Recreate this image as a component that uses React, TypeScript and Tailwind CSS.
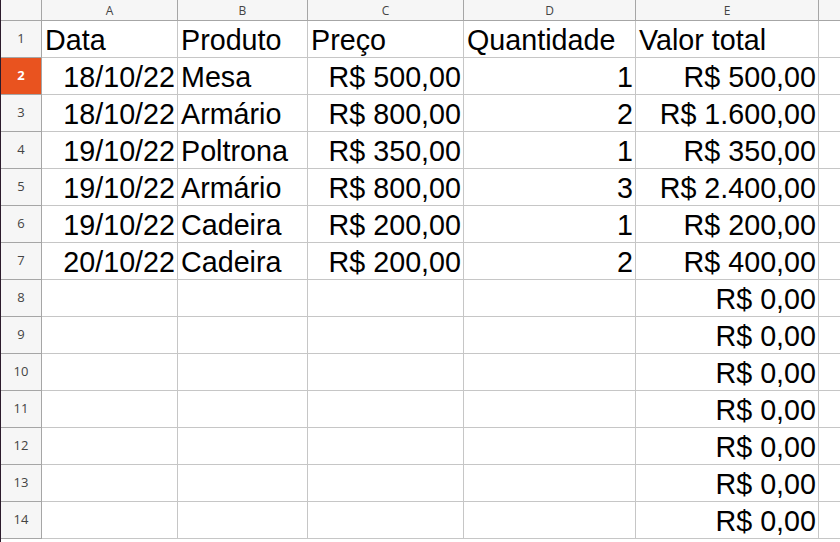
import React from "react";

const cols = [
  { key: "A", w: 136 },
  { key: "B", w: 130 },
  { key: "C", w: 156 },
  { key: "D", w: 172 },
  { key: "E", w: 183 },
];

type Cell = { t: string; r?: boolean };

const data: Cell[][] = [
  [{ t: "Data" }, { t: "Produto" }, { t: "Preço" }, { t: "Quantidade" }, { t: "Valor total" }],
  [{ t: "18/10/22", r: true }, { t: "Mesa" }, { t: "R$ 500,00", r: true }, { t: "1", r: true }, { t: "R$ 500,00", r: true }],
  [{ t: "18/10/22", r: true }, { t: "Armário" }, { t: "R$ 800,00", r: true }, { t: "2", r: true }, { t: "R$ 1.600,00", r: true }],
  [{ t: "19/10/22", r: true }, { t: "Poltrona" }, { t: "R$ 350,00", r: true }, { t: "1", r: true }, { t: "R$ 350,00", r: true }],
  [{ t: "19/10/22", r: true }, { t: "Armário" }, { t: "R$ 800,00", r: true }, { t: "3", r: true }, { t: "R$ 2.400,00", r: true }],
  [{ t: "19/10/22", r: true }, { t: "Cadeira" }, { t: "R$ 200,00", r: true }, { t: "1", r: true }, { t: "R$ 200,00", r: true }],
  [{ t: "20/10/22", r: true }, { t: "Cadeira" }, { t: "R$ 200,00", r: true }, { t: "2", r: true }, { t: "R$ 400,00", r: true }],
];

for (let i = 0; i < 7; i++) {
  data.push([{ t: "" }, { t: "" }, { t: "" }, { t: "" }, { t: "R$ 0,00", r: true }]);
}

export default function App() {
  return (
    <div
      className="w-[840px] h-[542px] overflow-hidden bg-white flex"
      style={{ fontFamily: '"Liberation Sans", Arial, sans-serif' }}
    >
      <div className="w-[1px] shrink-0 bg-[#2c1b2c]" />
      <div className="flex-1 flex flex-col min-w-0">
        {/* header row */}
        <div className="flex h-[21px] shrink-0 bg-[#f6f6f6] border-b border-[#a6a6a6]">
          <div className="w-[41px] shrink-0 border-r border-[#a6a6a6]" />
          {cols.map((c) => (
            <div
              key={c.key}
              className="shrink-0 border-r border-[#a6a6a6] flex items-center justify-center text-[12px] text-[#444] pt-[1px]"
              style={{ width: c.w, fontFamily: '"Open Sans", "DejaVu Sans", sans-serif' }}
            >
              {c.key}
            </div>
          ))}
          <div className="flex-1" />
        </div>
        {data.map((row, i) => {
          const active = i === 1;
          return (
            <div key={i} className="flex h-[37px] shrink-0">
              <div
                className={
                  "w-[41px] shrink-0 border-r border-b border-[#a6a6a6] flex items-center justify-center text-[13px] " +
                  (active ? "bg-[#e9531f] text-white font-bold" : "bg-[#f6f6f6] text-[#444]")
                }
                style={{ fontFamily: '"Open Sans", "DejaVu Sans", sans-serif' }}
              >
                {i + 1}
              </div>
              {row.map((cell, j) => (
                <div
                  key={j}
                  className={
                    "shrink-0 border-r border-b border-[#c6c6c6] flex items-end overflow-visible whitespace-nowrap text-[28.7px] leading-[32px] text-black pb-[1px] " +
                    (cell.r ? "justify-end pr-[2px]" : "justify-start pl-[3px]")
                  }
                  style={{ width: cols[j].w }}
                >
                  {cell.t}
                </div>
              ))}
              <div className="flex-1 border-b border-[#c6c6c6]" />
            </div>
          );
        })}
      </div>
    </div>
  );
}
